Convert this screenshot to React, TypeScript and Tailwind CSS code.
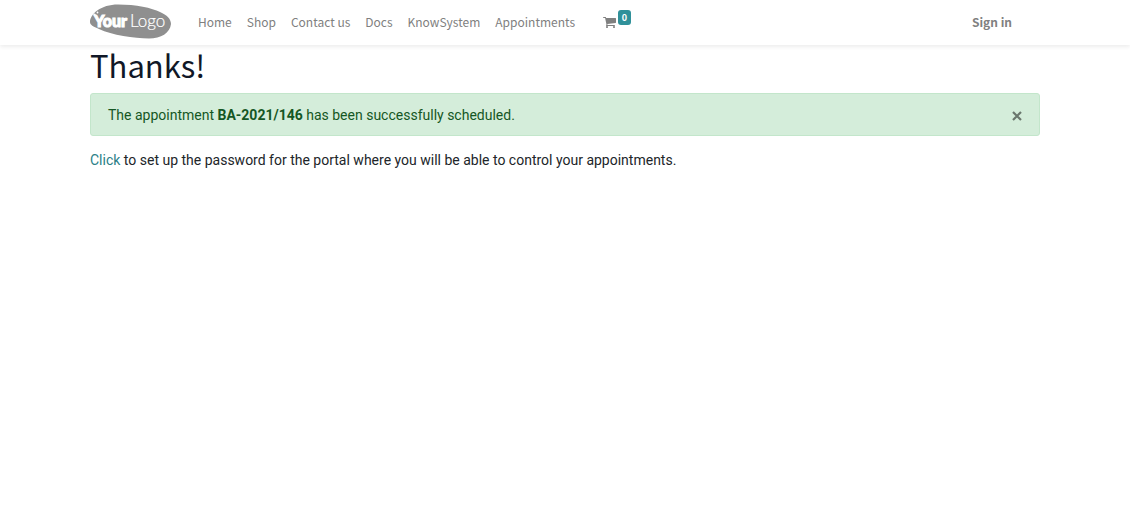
import { useState } from "react";

const links = ["Home", "Shop", "Contact us", "Docs", "KnowSystem", "Appointments"];

function Logo() {
  return (
    <svg viewBox="0 0 81 35" className="h-[35px] w-[81px]" role="img" aria-label="Your Logo">
      <path
        d="M0 18C0 10 11 0.500 28 0.500C46 0.500 62 4 70 8C77 11 81 15 81 20C80 29 71 34.500 59 34.500C44 34.500 22 31 9 25C3 22.500 0 21 0 18Z"
        fill="#8f8f8f"
      />
      <g fill="#ffffff">
        <circle cx="4.500" cy="10.500" r="1.100" />
        <circle cx="7.500" cy="8.500" r="0.900" />
        <text
          x="4"
          y="22.500"
          fontFamily="Lato, sans-serif"
          fontWeight="900"
          fontSize="16"
          stroke="#ffffff"
          strokeWidth="1"
        >
          Your
        </text>
        <text x="40" y="22.500" fontFamily="Lato, sans-serif" fontWeight="300" fontSize="17" stroke="#ffffff" strokeWidth="0.2">
          Logo
        </text>
      </g>
    </svg>
  );
}

function CartIcon() {
  return (
    <svg viewBox="0 0 1664 1536" className="h-3 w-[13px]" fill="currentColor" aria-hidden="true">
      <path d="M640 1408q0 52-38 90t-90 38-90-38-38-90 38-90 90-38 90 38 38 90zM1536 1408q0 52-38 90t-90 38-90-38-38-90 38-90 90-38 90 38 38 90zM1664 320v512q0 24-16.500 42.500t-40.500 21.500l-1044 122q13 60 13 70 0 16-24 64h920q26 0 45 19t19 45-19 45-45 19h-1024q-26 0-45-19t-19-45q0-11 8-31.500t16-36 21.500-40 15.500-29.500l-177-823h-204q-26 0-45-19t-19-45 19-45 45-19h256q16 0 28.500 6.500t19.500 15.500 13 24.500 8 26 5.500 29.500 4.500 26h1201q26 0 45 19t19 45z" />
    </svg>
  );
}

export default function App() {
  const [open, setOpen] = useState(true);
  return (
    <div className="min-h-screen bg-white font-['Roboto',sans-serif] text-[#212529]">
      <header className="bg-white font-['Noto_Sans_CJK_SC',sans-serif] text-[12px] leading-[18px] text-[#808080] shadow-[0_2px_4px_rgba(0,0,0,0.075)]">
        <nav className="mx-auto flex min-h-[45px] max-w-[950px] items-center pt-1 pb-1.5">
          <a href="#home" className="mr-[27px] shrink-0">
            <Logo />
          </a>
          <ul className="flex items-center gap-[15px]">
            {links.map((label) => (
              <li key={label}>
                <a href="#page" className="whitespace-nowrap">
                  {label}
                </a>
              </li>
            ))}
          </ul>
          <a href="#cart" aria-label="Cart, 0 items" className="ml-7 flex items-center gap-0.5">
            <CartIcon />
            <span className="mb-2 flex h-[15px] w-[13px] items-center justify-center rounded-[3px] bg-[#30919a] text-[9px] font-bold text-white">
              0
            </span>
          </a>
          <a href="#signin" className="mr-7 ml-auto whitespace-nowrap font-bold">
            Sign in
          </a>
        </nav>
      </header>
      <main className="mx-auto max-w-[950px]">
        <h1 className="pb-2 font-['Noto_Sans_CJK_SC',sans-serif] text-[31px] leading-10 text-[#111827]">
          Thanks!
        </h1>
        {open && (
          <div
            role="alert"
            className="mb-3.5 flex items-center justify-between rounded-[3px] border border-[#c3e6cb] bg-[#d4edda] px-[17px] pt-[11px] pb-[9px] text-[14px] leading-[21px] text-[#155724]"
          >
            <p>
              The appointment <b>BA-2021/146</b> has been successfully scheduled.
            </p>
            <button type="button" aria-label="Close" onClick={() => setOpen(false)} className="text-[#6a776d]">
              <svg viewBox="0 0 10 10" className="h-2.5 w-2.5" stroke="currentColor" strokeWidth="2.2" aria-hidden="true">
                <path d="M1 1L9 9M9 1L1 9" />
              </svg>
            </button>
          </div>
        )}
        <p className="text-[14px] leading-[21px]">
          <a href="#password" className="text-[#2b7f87]">
            Click
          </a>{" "}
          to set up the password for the portal where you will be able to control your appointments.
        </p>
      </main>
    </div>
  );
}
